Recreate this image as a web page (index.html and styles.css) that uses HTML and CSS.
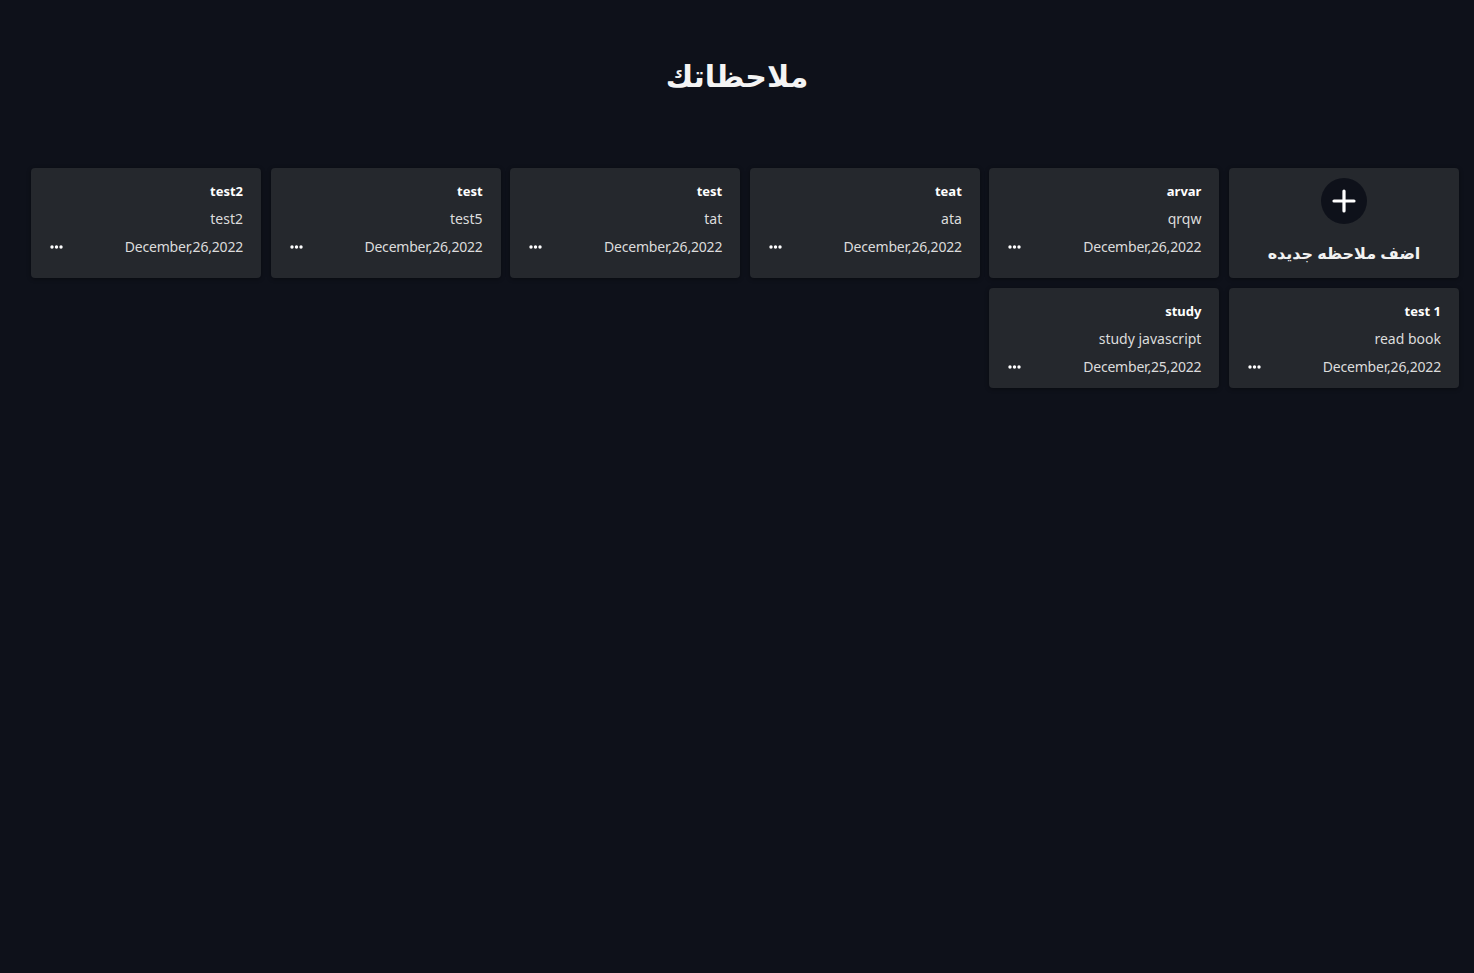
FILE: index.html
```html
<!DOCTYPE html>
<html lang="ar">
<head>
<meta charset="utf-8">
<link rel="stylesheet" href="styles.css">
</head>
<body>
<h1 class="page-title">ملاحظاتك</h1>
<div class="notes">
  <div class="card add-card">
    <div class="plus"><svg width="24" height="24" viewBox="0 0 24 24"><path d="M12 2v20M2 12h20" stroke="#fff" stroke-width="3.2" stroke-linecap="round"/></svg></div>
    <div class="add-label">اضف ملاحظه جديده</div>
  </div>
  <div class="card"><div class="note-title">arvar</div><div class="note-body">qrqw</div><div class="note-foot"><span class="date">December,26,2022</span><svg class="dots" width="13" height="4" viewBox="0 0 13 4"><circle cx="2" cy="2" r="1.7"/><circle cx="6.5" cy="2" r="1.7"/><circle cx="11" cy="2" r="1.7"/></svg></div></div>
  <div class="card"><div class="note-title">teat</div><div class="note-body">ata</div><div class="note-foot"><span class="date">December,26,2022</span><svg class="dots" width="13" height="4" viewBox="0 0 13 4"><circle cx="2" cy="2" r="1.7"/><circle cx="6.5" cy="2" r="1.7"/><circle cx="11" cy="2" r="1.7"/></svg></div></div>
  <div class="card"><div class="note-title">test</div><div class="note-body">tat</div><div class="note-foot"><span class="date">December,26,2022</span><svg class="dots" width="13" height="4" viewBox="0 0 13 4"><circle cx="2" cy="2" r="1.7"/><circle cx="6.5" cy="2" r="1.7"/><circle cx="11" cy="2" r="1.7"/></svg></div></div>
  <div class="card"><div class="note-title">test</div><div class="note-body">test5</div><div class="note-foot"><span class="date">December,26,2022</span><svg class="dots" width="13" height="4" viewBox="0 0 13 4"><circle cx="2" cy="2" r="1.7"/><circle cx="6.5" cy="2" r="1.7"/><circle cx="11" cy="2" r="1.7"/></svg></div></div>
  <div class="card"><div class="note-title">test2</div><div class="note-body">test2</div><div class="note-foot"><span class="date">December,26,2022</span><svg class="dots" width="13" height="4" viewBox="0 0 13 4"><circle cx="2" cy="2" r="1.7"/><circle cx="6.5" cy="2" r="1.7"/><circle cx="11" cy="2" r="1.7"/></svg></div></div>
  <div class="card short"><div class="note-title">test 1</div><div class="note-body">read book</div><div class="note-foot"><span class="date">December,26,2022</span><svg class="dots" width="13" height="4" viewBox="0 0 13 4"><circle cx="2" cy="2" r="1.7"/><circle cx="6.5" cy="2" r="1.7"/><circle cx="11" cy="2" r="1.7"/></svg></div></div>
  <div class="card short"><div class="note-title">study</div><div class="note-body">study javascript</div><div class="note-foot"><span class="date">December,25,2022</span><svg class="dots" width="13" height="4" viewBox="0 0 13 4"><circle cx="2" cy="2" r="1.7"/><circle cx="6.5" cy="2" r="1.7"/><circle cx="11" cy="2" r="1.7"/></svg></div></div>
</div>
</body>
</html>
```
FILE: styles.css
```css
html, body {
  margin: 0;
  padding: 0;
  background: #0e111a;
  color: #fff;
  font-family: "Noto Sans", "DejaVu Sans", sans-serif;
  min-height: 100vh;
}
body {
  direction: rtl;
}
.page-title {
  margin: 0;
  padding-top: 56px;
  height: 112px;
  box-sizing: border-box;
  text-align: center;
  font-size: 30px;
  font-weight: 700;
  line-height: 40px;
  color: #f4f4f4;
}
.notes {
  margin-top: 56px;
  display: grid;
  grid-template-columns: repeat(6, 230px);
  column-gap: 9.6px;
  row-gap: 10px;
  padding: 0 15px 0 31px;
}
.card {
  background: #25282d;
  border-radius: 4px;
  height: 110px;
  box-sizing: border-box;
  padding: 12px 18px 0 18px;
  box-shadow: 0 1px 4px rgba(0,0,0,0.4);
  display: flex;
  flex-direction: column;
  color: #e8e8e8;
}
.card.short {
  height: 100px;
}
.note-title {
  font-size: 13px;
  font-weight: 700;
  line-height: 22px;
  color: #fff;
  direction: ltr;
  text-align: right;
}
.note-body {
  font-size: 14px;
  line-height: 28px;
  margin-top: 3px;
  color: #dcdcdc;
  direction: ltr;
  text-align: right;
}
.note-foot {
  display: flex;
  justify-content: space-between;
  align-items: center;
  line-height: 26px;
  margin-top: 1px;
}
.date {
  font-size: 14px;
  color: #dcdcdc;
  direction: ltr;
  letter-spacing: -0.2px;
}
.dots {
  fill: #fff;
  display: block;
  margin-left: 1px;
}
.add-card {
  align-items: center;
  padding-top: 10px;
}
.plus {
  width: 46px;
  height: 46px;
  border-radius: 50%;
  background: #0e111a;
  display: flex;
  align-items: center;
  justify-content: center;
}
.add-label {
  margin-top: 16px;
  font-size: 16px;
  font-weight: 700;
  line-height: 26px;
  color: #f2f2f2;
}
```
